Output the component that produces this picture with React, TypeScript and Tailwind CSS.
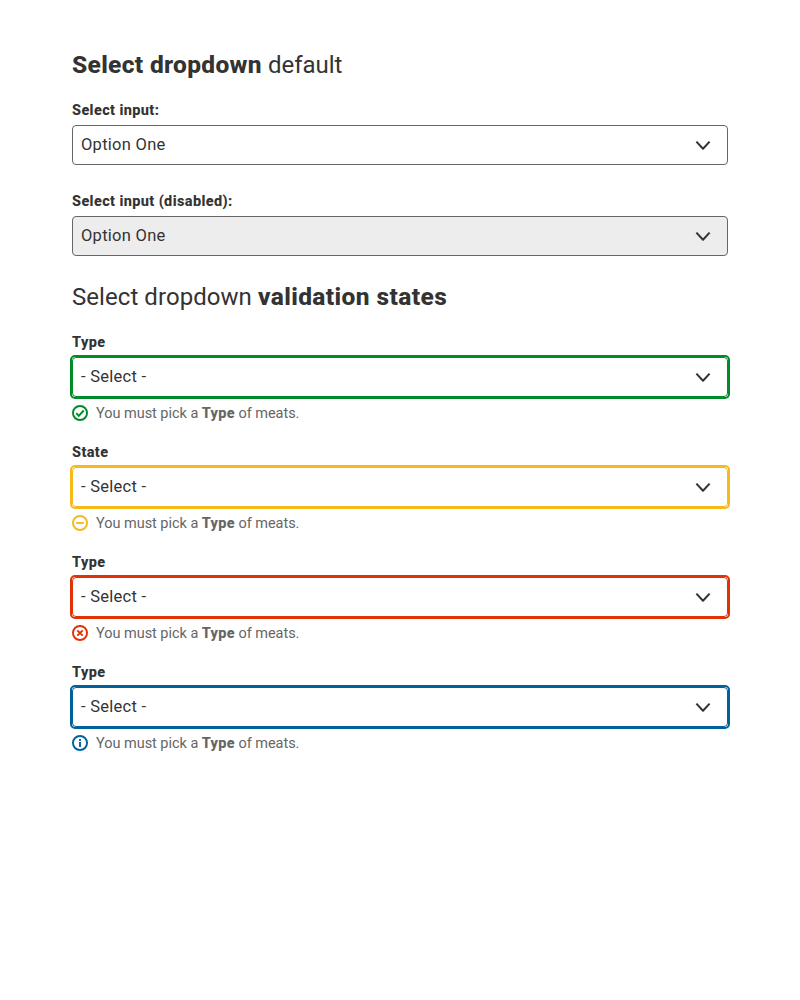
import type { ReactNode } from "react";

function Chevron() {
  return (
    <svg className="h-4 w-4 shrink-0" viewBox="0 0 16 16" fill="none" stroke="#333" strokeWidth="2">
      <path d="M1.4 4.6 8 11.8l6.6-7.2" strokeLinejoin="round" />
    </svg>
  );
}

type State = "success" | "warning" | "error" | "info";

const rings: Record<State, string> = {
  success: "border-[#008a28]",
  warning: "border-[#f5b91a]",
  error: "border-[#e13205]",
  info: "border-[#00629b]",
};

const tones: Record<State, string> = {
  success: "text-[#008a28]",
  warning: "text-[#f5b91a]",
  error: "text-[#e13205]",
  info: "text-[#00629b]",
};

const glyphs: Record<State, ReactNode> = {
  success: <path d="m4.3 8.2 2.5 2.6 4.9-5.3" />,
  warning: <path d="M4.2 8h7.6" />,
  error: <path d="m5.3 5.3 5.4 5.4m0-5.4-5.4 5.4" />,
  info: <path d="M8 7v5M8 4v2" />,
};

function StateIcon({ state }: { state: State }) {
  return (
    <svg
      className={"h-4 w-4 shrink-0 " + tones[state]}
      viewBox="0 0 16 16"
      fill="none"
      stroke="currentColor"
      strokeWidth="1.9"
    >
      <circle cx="8" cy="8" r="7.05" />
      {glyphs[state]}
    </svg>
  );
}

function Select({ value, look }: { value: string; look: string }) {
  return (
    <div className={"flex h-10 items-center justify-between rounded border pr-4 pl-2 " + look}>
      <span className="text-[16.5px] leading-6 tracking-[0.27px]">{value}</span>
      <Chevron />
    </div>
  );
}

function Label({ children }: { children: ReactNode }) {
  return <div className="h-5 text-[14.5px] leading-[22px] font-extrabold tracking-[0.38px]">{children}</div>;
}

function Field({ label, state }: { label: string; state: State }) {
  return (
    <div className="h-[110px]">
      <Label>{label}</Label>
      <div className={"-mx-0.5 mt-[3px] rounded-[5px] border-2 " + rings[state]}>
        <Select value="- Select -" look={"bg-white " + rings[state]} />
      </div>
      <div className="mt-1 flex h-5 items-center gap-2">
        <StateIcon state={state} />
        <span className="pt-0.5 text-[14.5px] leading-5 tracking-[-0.03px] text-[#666]">
          You must pick a <b className="font-extrabold tracking-[0.26px]">Type</b> of meats.
        </span>
      </div>
    </div>
  );
}

export default function App() {
  return (
    <main className="min-h-[1000px] bg-white px-[72px] pt-[49px] font-['Roboto','Liberation_Sans',sans-serif] text-[#333]">
      <h1 className="h-[51px] text-2xl leading-8">
        <b className="text-[24.5px] font-extrabold tracking-[0.33px]">Select dropdown</b> default
      </h1>
      <div className="flex h-[91px] flex-col gap-[5px]">
        <Label>Select input:</Label>
        <Select value="Option One" look="border-[#666] bg-white" />
      </div>
      <div className="flex h-[90px] flex-col gap-[5px]">
        <Label>Select input (disabled):</Label>
        <Select value="Option One" look="border-[#666] bg-[#ededed]" />
      </div>
      <h2 className="h-[51px] text-2xl leading-8 tracking-[0.06px]">
        Select dropdown <b className="text-[24.5px] font-extrabold tracking-[0.4px]">validation states</b>
      </h2>
      <Field label="Type" state="success" />
      <Field label="State" state="warning" />
      <Field label="Type" state="error" />
      <Field label="Type" state="info" />
    </main>
  );
}
